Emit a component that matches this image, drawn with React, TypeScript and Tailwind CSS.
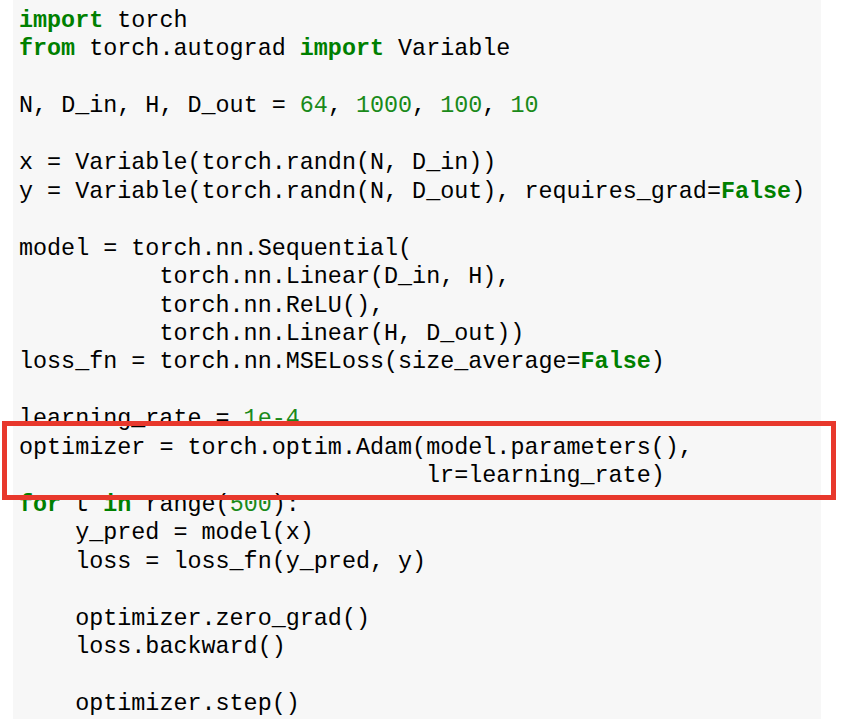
const code = `import torch
from torch.autograd import Variable

N, D_in, H, D_out = 64, 1000, 100, 10

x = Variable(torch.randn(N, D_in))
y = Variable(torch.randn(N, D_out), requires_grad=False)

model = torch.nn.Sequential(
          torch.nn.Linear(D_in, H),
          torch.nn.ReLU(),
          torch.nn.Linear(H, D_out))
loss_fn = torch.nn.MSELoss(size_average=False)

learning_rate = 1e-4
optimizer = torch.optim.Adam(model.parameters(),
                             lr=learning_rate)
for t in range(500):
    y_pred = model(x)
    loss = loss_fn(y_pred, y)

    optimizer.zero_grad()
    loss.backward()

    optimizer.step()`;

const keywords = new Set(["import", "from", "False", "for", "in"]);

function CodeLine({ text }: { text: string }) {
    const parts = text.split(/([A-Za-z_]\w*|\d+(?:e-\d+)?)/);
    return (
        <div className="h-[28.46px] whitespace-pre">
            {parts.map((part, i) => {
                if (keywords.has(part)) return <span key={i} className="font-bold text-[#008000]">{part}</span>;
                if (/^\d/.test(part)) return <span key={i} className="text-[#1a8a1a]">{part}</span>;
                return <span key={i}>{part}</span>;
            })}
            {text === "" ? " " : null}
        </div>
    );
}

export default function App() {
    return (
        <div className="relative w-[842px] h-[722px] bg-white overflow-hidden">
            <div className="ml-[13px] w-[808px] h-[719px] bg-[#f7f7f7] pl-[6px] pt-[7px] font-['Liberation_Mono',monospace] text-[23.4px] leading-[28.46px] text-black">
                {code.split("\n").map((line, i) => <CodeLine key={i} text={line} />)}
            </div>
            <div className="absolute left-[2px] top-[421px] w-[834px] h-[79px] border-[5px] border-[#e8382c]" />
        </div>
    );
}
